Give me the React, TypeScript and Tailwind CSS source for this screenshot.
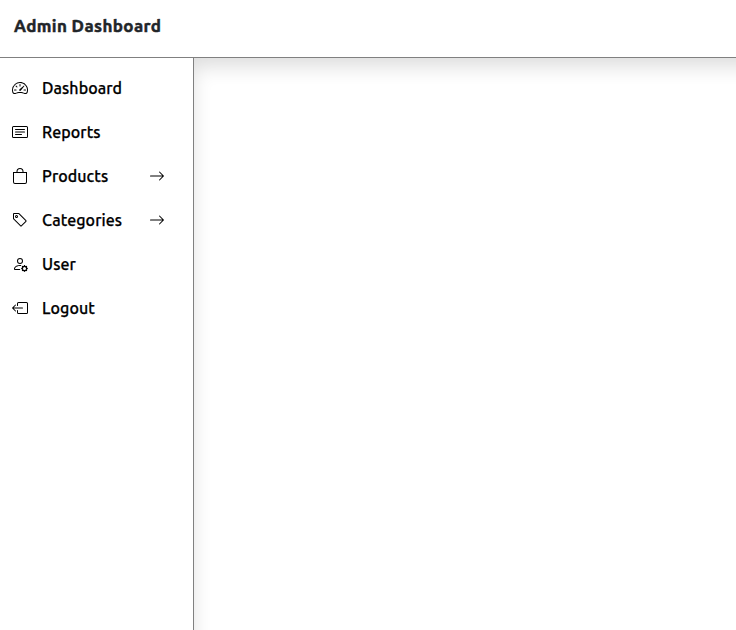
import {
  BsArrowRight,
  BsBag,
  BsBoxArrowLeft,
  BsCardText,
  BsPersonGear,
  BsSpeedometer2,
  BsTag,
} from 'react-icons/bs';

const items = [
  { label: 'Dashboard', Icon: BsSpeedometer2, expandable: false },
  { label: 'Reports', Icon: BsCardText, expandable: false },
  { label: 'Products', Icon: BsBag, expandable: true },
  { label: 'Categories', Icon: BsTag, expandable: true },
  { label: 'User', Icon: BsPersonGear, expandable: false },
  { label: 'Logout', Icon: BsBoxArrowLeft, expandable: false },
];

export default function App() {
  return (
    <div className="flex h-screen flex-col overflow-hidden bg-white font-['Ubuntu','Noto_Sans',sans-serif]">
      <header className="flex h-[58px] shrink-0 items-start border-b border-[#808080] pt-[14px] pl-[14px]">
        <h1 className="text-[17px] leading-6 font-bold tracking-[0.38px] whitespace-nowrap text-[#212529] [-webkit-text-stroke:0.5px_#212529]">
          Admin Dashboard
        </h1>
      </header>
      <div className="flex min-h-0 flex-1">
        <nav className="w-[194px] shrink-0 border-r border-[#808080] pt-2">
          <ul>
            {items.map(({ label, Icon, expandable }) => (
              <li key={label} className="flex h-11 items-center pl-3 text-black">
                <Icon className="size-4 shrink-0" />
                <span className="ml-[14px] w-[107px] text-[16px] leading-6 font-medium tracking-[0.08px] whitespace-nowrap [-webkit-text-stroke:0.25px_#000]">
                  {label}
                </span>
                {expandable && <BsArrowRight className="size-4 shrink-0" />}
              </li>
            ))}
          </ul>
        </nav>
        <main className="-mr-10 -mb-10 flex-1 bg-white shadow-[inset_-2px_8px_20px_rgba(0,0,0,0.14)]" />
      </div>
    </div>
  );
}
